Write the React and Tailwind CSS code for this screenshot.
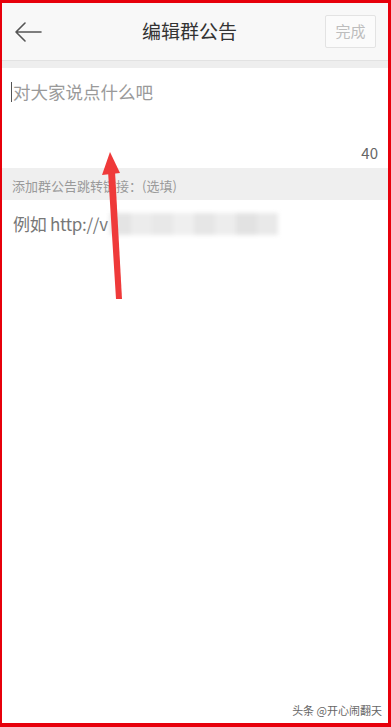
export default function App() {
  const blur = ['#e4e4e4', '#ececec', '#e8e8e8', '#efefef', '#e6e6e6', '#ededed', '#e2e2e2', '#e9e9e9'];

  return (
    <div
      className="relative w-[391px] h-[727px] overflow-hidden bg-white border-red-600 border-l-[2px] border-t-[3px] border-r-[3px] border-b-[4px] flex flex-col"
      style={{ fontFamily: '"Noto Sans CJK SC", "Noto Sans", sans-serif' }}
    >
      {/* header */}
      <div className="h-[58px] bg-[#f8f8f8] border-b border-[#e2e2e2] flex items-center justify-between px-3 shrink-0">
        <button className="w-10 h-10 flex items-center">
          <svg width="28" height="20" viewBox="0 0 28 20" fill="none" stroke="#555" strokeWidth="1.6" strokeLinecap="round" strokeLinejoin="round">
            <path d="M27 10H2M11 1L2 10l9 9" />
          </svg>
        </button>
        <div className="text-[19px] text-[#333] font-normal">编辑群公告</div>
        <button className="w-[51px] h-[33px] border border-[#e3e3e3] rounded-[2px] bg-[#fbfbfb] text-[15px] text-[#bdbdbd] flex items-center justify-center">
          完成
        </button>
      </div>
      <div className="h-[7px] bg-[#eeeeee] shrink-0" />

      {/* notice input */}
      <div className="h-[100px] bg-white relative px-[9px] pt-[11px] shrink-0">
        <div className="flex items-center text-[17.5px] text-[#9a9a9a] leading-[26px]">
          <span className="w-px h-[20px] bg-[#555] mr-px" />
          对大家说点什么吧
        </div>
        <div className="absolute right-[10px] bottom-[4px] text-[15px] text-[#666]">40</div>
      </div>

      {/* link label */}
      <div className="h-[32px] bg-[#efefef] flex items-center px-[10px] pt-[4px] text-[13px] text-[#9a9a9a] shrink-0">
        添加群公告跳转链接：(选填)
      </div>

      {/* link input */}
      <div className="px-[11px] pt-[11px] flex items-center text-[17px] text-[#777]">
        <span className="tracking-[-0.3px]">例如 http://v</span>
        <div className="flex items-center ml-[2px] blur-[2px]">
          {blur.map((c, i) => (
            <div key={i} className="w-[21px] h-[22px]" style={{ backgroundColor: c }} />
          ))}
        </div>
      </div>

      <div className="flex-1" />
      <div className="flex justify-end pr-[6px] pb-[5px] text-[11px] text-[#666]">头条 @开心闹翻天</div>

      {/* annotation arrow */}
      <svg className="absolute left-0 top-0 pointer-events-none" width="391" height="727" viewBox="0 0 391 727">
        <polygon points="114,296 120,296 113,168 106,168" fill="#ef3a3a" />
        <polygon points="108,149 100,172 118,170" fill="#ef3a3a" />
      </svg>
    </div>
  );
}
